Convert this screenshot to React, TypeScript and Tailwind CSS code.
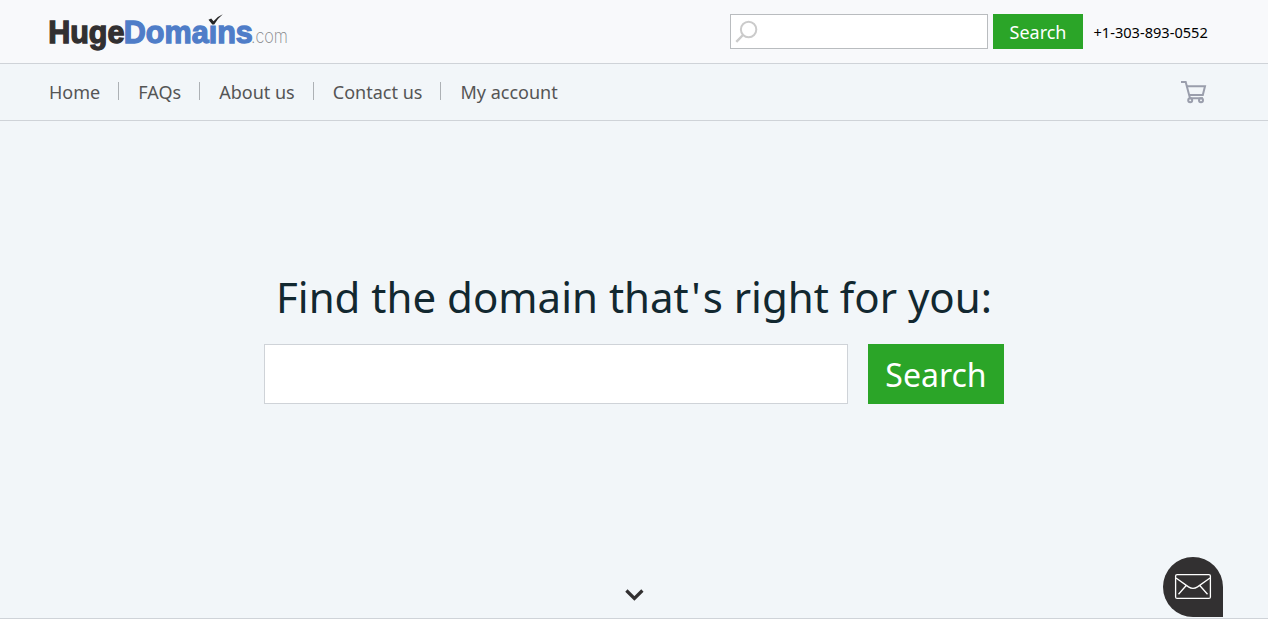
const links = ["Home", "FAQs", "About us", "Contact us", "My account"];

function Logo() {
  return (
    <svg width="260" height="50" viewBox="0 0 260 50" className="block" fontFamily="'Liberation Sans', Arial, sans-serif">
      <g fontWeight="bold" fontSize="31" strokeWidth="1.3">
        <text x="0.2" y="33.6" fill="#323031" stroke="#323031" textLength="76.2" lengthAdjust="spacingAndGlyphs">Huge</text>
        <text x="75.8" y="33.6" fill="#4f7dc8" stroke="#4f7dc8" textLength="129" lengthAdjust="spacingAndGlyphs">Domains</text>
      </g>
      <rect x="160" y="7" width="9" height="9.3" fill="#f8f9fb" />
      <path d="M160.5 10.8 163.2 9.5 165.5 12.3Q169 7.5 174.8 5.2 169.5 9.5 166.2 15.5L164.3 15.5Z" fill="#252525" />
      <text x="203" y="33.8" fontFamily="Inter, sans-serif" fontWeight="200" fontSize="19" fill="#858689" textLength="37" lengthAdjust="spacingAndGlyphs">.com</text>
    </svg>
  );
}

function CartIcon() {
  return (
    <svg width="28" height="26" viewBox="0 0 28 26" fill="none" stroke="#9a9eac" strokeWidth="2">
      <path d="M1 3H5.7L10 19.2H23" />
      <path d="M6.7 7.2H25L22.8 15.9H9" />
      <circle cx="10.2" cy="21.2" r="2" />
      <circle cx="21" cy="21.2" r="2" />
    </svg>
  );
}

export default function App() {
  return (
    <div className="h-[637px] overflow-hidden bg-white font-['Noto_Sans',sans-serif]">
      <div className="relative w-[1268px]">
        <header className="flex h-16 items-start border-b border-[#cfd3d8] bg-[#f8f9fb] pl-12">
          <div className="pt-[9px]"><Logo /></div>
          <form className="ml-[422px] flex pt-3.5">
            <label className="flex h-[35px] w-[258px] items-center border border-[#b9bcbf] bg-white pl-1">
              <svg width="24" height="25" viewBox="0 0 24 25" fill="none" stroke="#cbcbcb" strokeWidth="2" className="shrink-0">
                <circle cx="13.6" cy="10.5" r="7.7" />
                <path d="M8 16 1.3 22.8" strokeWidth="2.4" />
              </svg>
              <input aria-label="Domain" className="min-w-0 flex-1 outline-none" />
            </label>
            <button type="button" className="ml-[5px] h-[35px] w-[90px] bg-[#2ba528] pt-px text-lg leading-[35px] text-white">Search</button>
          </form>
          <span className="ml-[10.5px] pt-[22px] text-[14.6px] leading-5 text-black">+1-303-893-0552</span>
        </header>
        <nav className="flex h-[57px] items-center border-b border-[#cfd3d8] bg-[#f2f6f9] pl-[49px]">
          <div className="flex flex-1 items-center text-lg text-[#555]">
            {links.map((l, i) => (
              <div key={l} className="flex items-center">
                {i > 0 && <span className="mr-[19.3px] ml-[17.8px] h-[18px] w-px -translate-y-px bg-[#adb1b5]" />}
                <a href="#">{l}</a>
              </div>
            ))}
          </div>
          <a href="#" aria-label="Cart" className="mr-[60px]"><CartIcon /></a>
        </nav>
        <main className="flex h-[498px] flex-col items-center border-b border-[#cfd3d8] bg-[#f2f6f9] pt-[146px]">
          <h1 className="text-[42px] leading-[60px] whitespace-nowrap text-[#122830]">
            Find the domain that<span className="pr-[2px] pl-[2.5px]">'</span>s right for you:
          </h1>
          <form className="mt-[17px] flex gap-5">
            <input aria-label="Find a domain" className="h-[60px] w-[584px] border border-[#cfd3d8] bg-white px-4 text-3xl outline-none" />
            <button type="button" className="h-[60px] w-[136px] bg-[#2ba528] pt-0.5 text-[32px] leading-[58px] text-white">Search</button>
          </form>
          <svg width="20" height="14" viewBox="0 0 20 14" fill="none" stroke="#323031" strokeWidth="3.2" className="mt-[184px]">
            <path d="M2.4 2.5 10.4 10.5 18.4 2.5" />
          </svg>
        </main>
        <button type="button" aria-label="Email" className="absolute top-[557px] left-[1163px] flex h-[60px] w-[60px] items-center justify-center rounded-[30px] rounded-br-none bg-[#323031]">
          <svg width="38" height="28" viewBox="0 0 38 28" fill="none" stroke="white" strokeWidth="1.3">
            <rect x="1.6" y="1.6" width="34.8" height="23.8" rx="1.5" />
            <path d="M2 5 14.5 13.9Q19 16.9 23.5 13.9L36 5M12 12.7 4.5 21.2M26 12.7 33.5 21.2" />
          </svg>
        </button>
      </div>
    </div>
  );
}
